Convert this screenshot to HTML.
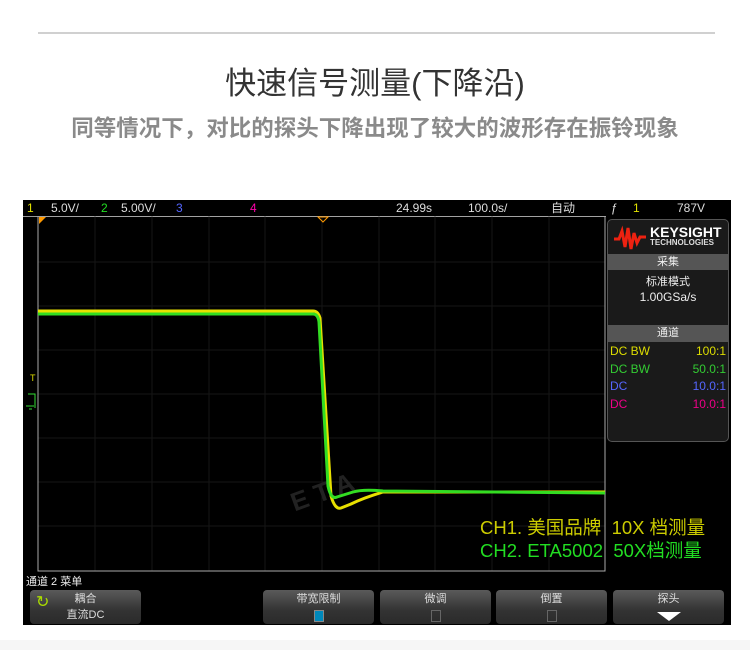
<!DOCTYPE html>
<html><head><meta charset="utf-8"><style>
*{margin:0;padding:0;box-sizing:border-box}
body{width:750px;height:650px;background:#fff;position:relative;overflow:hidden;font-family:"Liberation Sans","Noto Sans CJK SC",sans-serif}
.a{position:absolute}
.t{white-space:nowrap}
.btn{position:absolute;top:590px;height:34px;border-radius:4px;background:linear-gradient(#5a5a5a,#333 60%,#2a2a2a);color:#ddd;font-size:11px;text-align:center}
</style></head><body>
<div class="a" style="left:38px;top:32px;width:677px;height:2px;background:#d0d0d0"></div>
<div class="a t" style="left:0;width:750px;top:58px;text-align:center;font-size:31px;color:#333">快速信号测量(下降沿)</div>
<div class="a t" style="left:0;width:750px;top:111px;text-align:center;font-size:22.5px;font-weight:bold;color:#8a8a8a">同等情况下，对比的探头下降出现了较大的波形存在振铃现象</div>
<div class="a" style="left:23px;top:200px;width:708px;height:425px;background:#000"></div>
<div class="a t" style="left:23px;top:200px;height:17px;width:708px;font-size:12px;color:#ddd;line-height:17px">
<span class="a" style="left:4px;color:#e0e000">1</span><span class="a" style="left:28px">5.0V/</span>
<span class="a" style="left:78px;color:#2d2">2</span><span class="a" style="left:98px">5.00V/</span>
<span class="a" style="left:153px;color:#56f">3</span><span class="a" style="left:227px;color:#f0a">4</span>
<span class="a" style="left:373px">24.99s</span><span class="a" style="left:445px">100.0s/</span>
<span class="a" style="left:528px">自动</span><span class="a" style="left:588px">ƒ</span><span class="a" style="left:610px;color:#e0e000">1</span><span class="a" style="left:654px">787V</span></div>
<div class="a" style="left:23px;top:216px;width:583px;height:1px;background:#999"></div>
<svg class="a" style="left:23px;top:216px" width="583" height="356">
<g stroke="#161616" stroke-width="1">
<line x1="72" y1="0" x2="72" y2="355"/><line x1="129" y1="0" x2="129" y2="355"/><line x1="186" y1="0" x2="186" y2="355"/><line x1="242" y1="0" x2="242" y2="355"/><line x1="299" y1="0" x2="299" y2="355"/><line x1="356" y1="0" x2="356" y2="355"/><line x1="412" y1="0" x2="412" y2="355"/><line x1="469" y1="0" x2="469" y2="355"/><line x1="526" y1="0" x2="526" y2="355"/>
<line x1="15" y1="46" x2="582" y2="46"/><line x1="15" y1="90" x2="582" y2="90"/><line x1="15" y1="134" x2="582" y2="134"/><line x1="15" y1="178" x2="582" y2="178"/><line x1="15" y1="222" x2="582" y2="222"/><line x1="15" y1="266" x2="582" y2="266"/><line x1="15" y1="310" x2="582" y2="310"/></g>
<rect x="15" y="0" width="567" height="355" fill="none" stroke="#aaa"/>
<path d="M16 1 L23 1 L16 8Z" fill="#f90"/><path d="M295 1 L305 1 L300 6Z" fill="none" stroke="#f90"/>
<text x="268" y="285" font-size="26" font-weight="bold" fill="#222" transform="rotate(-20 300 280)">E T A</text>
<path d="M15 95 L290 95 Q295 95 297 102 L308 280 Q312 294 318 292 L328 288 Q340 282 360 276 L582 276" fill="none" stroke="#e8e000" stroke-width="3"/>
<path d="M15 98 L290 98 Q295 98 296 106 L305 270 Q308 284 314 281 L330 276 Q340 273 360 275 L582 277" fill="none" stroke="#33dd22" stroke-width="3"/>
<text x="7" y="165" font-size="9" fill="#dd0">T</text>
<path d="M5 178 L12 178 L12 192 M3 190 L11 190 M6 193 L9 193" stroke="#3d3" fill="none"/>
</svg>
<div class="a" style="left:607px;top:219px;width:122px;height:223px;border:1px solid #555;border-radius:5px;background:#1a1a1a"></div>
<svg class="a" style="left:613px;top:225px" width="34" height="26"><path d="M1 14 L6 14 L9 6 L12 22 L15 3 L18 24 L21 8 L24 18 L27 12 L33 12" fill="none" stroke="#e21" stroke-width="3"/></svg>
<div class="a t" style="left:650px;top:224px;font-size:14px;font-weight:bold;color:#fff">KEYSIGHT</div>
<div class="a t" style="left:650px;top:238px;font-size:8px;font-weight:bold;color:#ddd">TECHNOLOGIES</div>
<div class="a t" style="left:608px;top:254px;width:120px;height:16px;background:#555;color:#eee;font-size:11px;text-align:center;line-height:16px">采集</div>
<div class="a t" style="left:608px;top:273px;width:120px;text-align:center;color:#eee;font-size:11px">标准模式</div>
<div class="a t" style="left:608px;top:290px;width:120px;text-align:center;color:#eee;font-size:12px">1.00GSa/s</div>
<div class="a t" style="left:608px;top:325px;width:120px;height:17px;background:#555;color:#eee;font-size:11px;text-align:center;line-height:17px">通道</div>
<div class="a t" style="left:610px;top:343px;width:116px;font-size:12px;line-height:17.5px">
<div style="color:#dd0">DC BW<span style="float:right">100:1</span></div>
<div style="color:#3c3">DC BW<span style="float:right">50.0:1</span></div>
<div style="color:#56f">DC<span style="float:right">10.0:1</span></div>
<div style="color:#e08">DC<span style="float:right">10.0:1</span></div></div>
<div class="a t" style="left:480px;top:514px;font-size:18.5px;color:#cc0">CH1. 美国品牌 &nbsp;10X 档测量</div>
<div class="a t" style="left:480px;top:537px;font-size:18.5px;color:#2d2">CH2. ETA5002 &nbsp;50X档测量</div>
<div class="a t" style="left:26px;top:573px;font-size:11px;color:#eee">通道 2 菜单</div>
<div class="btn" style="left:30px;width:111px"><span class="a" style="left:6px;top:2px;color:#ad0;font-size:16px">↻</span>耦合<br>直流DC</div>
<div class="btn" style="left:263px;width:111px">带宽限制<br><span style="display:inline-block;width:10px;height:12px;border:1px solid #888;background:#08b;margin-top:4px"></span></div>
<div class="btn" style="left:380px;width:111px">微调<br><span style="display:inline-block;width:10px;height:12px;border:1px solid #666;margin-top:4px"></span></div>
<div class="btn" style="left:496px;width:111px">倒置<br><span style="display:inline-block;width:10px;height:12px;border:1px solid #666;margin-top:4px"></span></div>
<div class="btn" style="left:613px;width:111px">探头<br><span style="display:inline-block;width:0;height:0;border-left:12px solid transparent;border-right:12px solid transparent;border-top:9px solid #fff;margin-top:6px"></span></div>
<div class="a" style="left:0;top:640px;width:750px;height:10px;background:#f6f6f6"></div>
</body></html>
